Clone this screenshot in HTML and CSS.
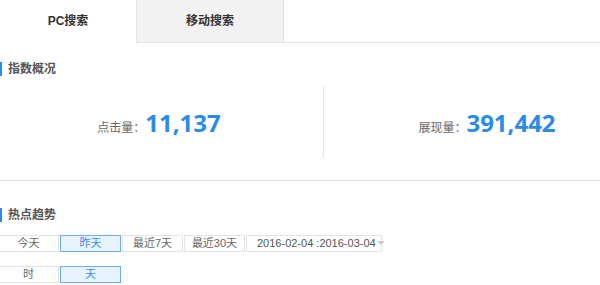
FILE: index.html
```html
<!DOCTYPE html>
<html>
<head>
    <meta charset="UTF-8">
    <title>搜索指数</title>
    <link rel="stylesheet" href="styles.css">
</head>
<body>
<div class="tabs">
    <div class="tab active">PC搜索</div>
    <div class="tab">移动搜索</div>
</div>

<h3 class="section-title">指数概况</h3>
<div class="stats">
    <div class="stat">
        <span class="stat-label">点击量：</span><span class="stat-num">11,137</span>
    </div>
    <div class="stat stat-right">
        <span class="stat-label">展现量：</span><span class="stat-num">391,442</span>
    </div>
</div>

<h3 class="section-title trend-title">热点趋势</h3>
<div class="btn-row">
    <span class="btn">今天</span>
    <span class="btn on">昨天</span>
    <span class="btn">最近7天</span>
    <span class="btn">最近30天</span>
    <span class="date-box">2016-02-04 :2016-03-04<i class="caret"></i></span>
</div>
<div class="btn-row row2">
    <span class="btn">时</span>
    <span class="btn on">天</span>
</div>
</body>
</html>
```

FILE: styles.css
```css
body {
    margin: 0;
    font-family: "Liberation Sans", Arial, "Noto Sans CJK SC", sans-serif;
    font-size: 12px;
    color: #555;
    background: #fff;
}

.tabs {
    display: flex;
    height: 42px;
    border-bottom: 1px solid #e3e3e3;
}

.tab {
    width: 148px;
    line-height: 42px;
    text-align: center;
    font-weight: bold;
    color: #333;
    background: #f2f2f2;
    border-left: 1px solid #e3e3e3;
    border-right: 1px solid #e3e3e3;
    box-sizing: border-box;
}

.tab.active {
    width: 136px;
    background: #fff;
    border: none;
    height: 43px; /* covers the line below */
}

.section-title {
    margin: 19px 0 0;
    padding-left: 6px;
    border-left: 2px solid #2a8ce8;
    font-size: 12px;
    line-height: 14px;
    color: #555;
}

.stats {
    display: grid;
    grid-template-columns: 318px 1fr;
    column-gap: 5px;
    margin-top: 10px;
    padding-bottom: 22px;
    border-bottom: 1px solid #e5e5e5;
}

.stat {
    display: flex;
    justify-content: center;
    align-items: baseline;
    height: 72px;
    padding-top: 23px;
    box-sizing: border-box;
}

.stat-right {
    border-left: 1px solid #e5e5e5;
    padding-left: 50px;
}

.stat-label {
    color: #666;
}

.stat-num {
    font-family: "Open Sans", sans-serif;
    font-size: 24px;
    font-weight: bold;
    color: #2a8ce8;
    line-height: 28px;
}

.trend-title {
    margin-top: 27px;
}

.btn-row {
    display: flex;
    gap: 1px;
    margin: 13px 0 0 -2px;
}

.btn, .date-box {
    width: 61px;
    height: 17px;
    line-height: 15px;
    border: 1px solid #e3e3e3;
    box-sizing: border-box;
    text-align: center;
    color: #666;
    font-size: 11px;
    white-space: nowrap;
}

.btn.on {
    background: #e8f3fe;
    border-color: #6aaef0;
    color: #3a8ee6;
}

.date-box {
    width: 136px;
    padding-left: 10px;
    text-align: left;
    color: #555;
}

.caret {
    display: inline-block;
    border: 4px solid transparent;
    border-top-color: #ccc;
    border-bottom: none;
    margin-left: 1px;
    vertical-align: 2px;
}

.row2 {
    margin-top: 14px;
}
```
